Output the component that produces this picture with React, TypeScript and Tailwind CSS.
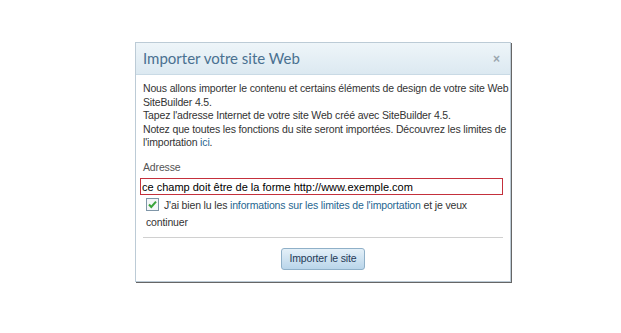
import React, { useState } from "react";

const body = { fontFamily: '"Liberation Sans", Arial, sans-serif' };

const CheckMark = () => (
  <svg viewBox="0 0 13 13" className="block h-[13px] w-[13px]">
    <rect x="0.5" y="0.5" width="12" height="12" fill="#f4f6f8" stroke="#7f96a8" />
    <path d="M3 6.5 L5.3 9 L10 3.6" fill="none" stroke="#3aa43a" strokeWidth="2" />
  </svg>
);

export default function App() {
  const [url, setUrl] = useState("ce champ doit être de la forme http://www.exemple.com");
  const [agreed, setAgreed] = useState(true);

  return (
    <div className="h-[333px] w-[621px] bg-white pl-[135px] pt-[42px]" style={body}>
      <div className="flex h-[240px] w-[376px] flex-col border border-[#bccbd6] bg-white shadow-[1px_1px_0_0_#666]">
        {/* Header */}
        <div className="flex h-[32px] shrink-0 items-center justify-between border-b border-[#c9dae5] bg-gradient-to-b from-[#eef5f9] to-[#dce9f1] pl-[7px] pr-[10px]">
          <h1 className="text-[15px] font-normal text-[#4a7191]" style={{ fontFamily: 'Lato, "Open Sans", sans-serif' }}>
            Importer votre site Web
          </h1>
          <button className="text-[12px] font-bold leading-none text-[#9aa6ae]">×</button>
        </div>

        {/* Body */}
        <div className="flex flex-1 flex-col px-[7px] pt-[7px] text-[10.5px] leading-[13.5px] tracking-[-0.15px] text-[#333]">
          <p className="whitespace-nowrap">
            Nous allons importer le contenu et certains éléments de design de votre site Web
            <br />
            SiteBuilder 4.5.
            <br />
            Tapez l'adresse Internet de votre site Web créé avec SiteBuilder 4.5.
            <br />
            Notez que toutes les fonctions du site seront importées. Découvrez les limites de
            <br />
            l'importation <a className="text-[#1f6690]">ici</a>.
          </p>

          <label className="mt-[11px] text-[#555]">Adresse</label>
          <input
            value={url}
            onChange={(e) => setUrl(e.target.value)}
            className="-ml-[3px] mt-[4px] h-[17px] w-[363px] border border-[#c4303c] px-[1px] text-[11px] leading-[15px] tracking-normal text-black outline-none"
            style={body}
          />

          <div className="mt-[2px] whitespace-nowrap pl-[3px] leading-[17px]">
            <span
              className="mr-[5px] inline-block cursor-pointer align-[-2px]"
              onClick={() => setAgreed(!agreed)}
            >
              {agreed ? (
                <CheckMark />
              ) : (
                <span className="block h-[13px] w-[13px] border border-[#7f96a8] bg-[#f4f6f8]" />
              )}
            </span>
            J'ai bien lu les <a className="text-[#1f6690]">informations sur les limites de l'importation</a> et je veux
            <br />
            continuer
          </div>

          <div className="mt-[6px] border-t border-[#d0d0d0]" />

          <div className="flex justify-center pt-[10px]">
            <button className="h-[22px] w-[84px] rounded-[3px] border border-[#8fb0c8] bg-gradient-to-b from-[#e4f0f8] to-[#b9d5ea] text-[10.5px] text-[#1f3a57]">
              Importer le site
            </button>
          </div>
        </div>
      </div>
    </div>
  );
}
